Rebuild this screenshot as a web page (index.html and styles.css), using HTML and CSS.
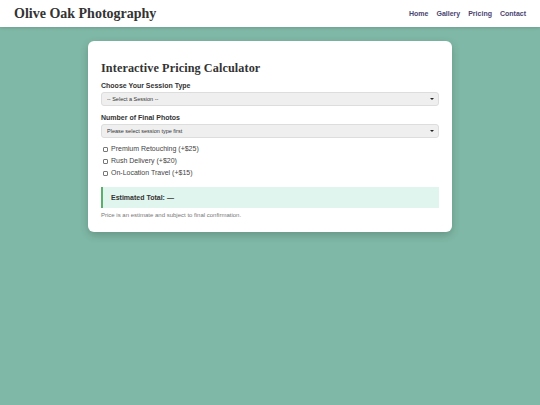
FILE: index.html
```html
<!DOCTYPE html>
<html lang="en">
<head>
<meta charset="utf-8">
<title>Olive Oak Photography - Pricing</title>
<link rel="stylesheet" href="styles.css">
</head>
<body>
<header class="site-header">
  <div class="brand">Olive Oak Photography</div>
  <nav class="nav">
    <a href="#">Home</a>
    <a href="#">Gallery</a>
    <a href="#">Pricing</a>
    <a href="#">Contact</a>
  </nav>
</header>
<main class="main">
  <section class="card">
    <h1 class="card-title">Interactive Pricing Calculator</h1>
    <label class="field-label" for="session">Choose Your Session Type</label>
    <div class="select-wrap">
      <select id="session" class="select">
        <option>-- Select a Session --</option>
      </select>
    </div>
    <label class="field-label" for="photos">Number of Final Photos</label>
    <div class="select-wrap">
      <select id="photos" class="select">
        <option>Please select session type first</option>
      </select>
    </div>
    <div class="options">
      <label class="option"><input type="checkbox" class="check"> Premium Retouching (+$25)</label>
      <label class="option"><input type="checkbox" class="check"> Rush Delivery (+$20)</label>
      <label class="option"><input type="checkbox" class="check"> On-Location Travel (+$15)</label>
    </div>
    <div class="total">Estimated Total: —</div>
    <p class="note">Price is an estimate and subject to final confirmation.</p>
  </section>
</main>
</body>
</html>
```
FILE: styles.css
```css
html, body {
  margin: 0;
  padding: 0;
}
body {
  background: #7fb8a6;
  font-family: "Liberation Sans", Arial, sans-serif;
  color: #333;
  min-height: 405px;
}
.site-header {
  background: #fff;
  height: 27px;
  display: flex;
  align-items: center;
  justify-content: space-between;
  padding: 0 14px;
  box-shadow: 0 1px 3px rgba(0,0,0,0.15);
}
.brand {
  font-family: "Liberation Serif", Georgia, serif;
  font-weight: bold;
  font-size: 14px;
  color: #333;
}
.nav {
  display: flex;
  gap: 8px;
}
.nav a {
  font-size: 7px;
  font-weight: bold;
  color: #4a4470;
  text-decoration: none;
}
.main {
  padding-top: 14px;
  display: flex;
  justify-content: center;
}
.card {
  background: #fff;
  width: 338px;
  padding: 20px 13px 13px;
  border-radius: 6px;
  box-shadow: 0 3px 8px rgba(0,0,0,0.2);
}
.card-title {
  font-family: "Liberation Serif", Georgia, serif;
  font-size: 12.2px;
  line-height: 15px;
  font-weight: bold;
  margin: 0 0 5px;
  color: #333;
  letter-spacing: 0.1px;
}
.field-label {
  display: block;
  font-size: 7px;
  line-height: 9px;
  font-weight: bold;
  margin-bottom: 2px;
}
.select-wrap {
  position: relative;
  margin-bottom: 7px;
}
.select-wrap::after {
  content: "";
  position: absolute;
  right: 5px;
  top: 6px;
  border-left: 2px solid transparent;
  border-right: 2px solid transparent;
  border-top: 2px solid #222;
}
.select {
  display: block;
  width: 100%;
  height: 14px;
  -webkit-appearance: none;
  appearance: none;
  font-family: "Liberation Sans", Arial, sans-serif;
  font-size: 5.5px;
  line-height: 12px;
  padding: 0 5px;
  background: #efefef;
  border: 1px solid #ddd;
  border-radius: 3px;
  color: #333;
  margin: 0;
}
.options {
  display: flex;
  flex-direction: column;
  margin-top: -2px;
}
.option {
  font-size: 7px;
  line-height: 12px;
  color: #444;
  display: flex;
  align-items: center;
  gap: 3px;
}
.check {
  -webkit-appearance: none;
  appearance: none;
  width: 5px;
  height: 5px;
  border: 0.8px solid #777;
  border-radius: 1px;
  margin: 0 0 0 2px;
  background: #fff;
}
.total {
  margin-top: 8px;
  background: #e0f5ee;
  border-left: 2px solid #5cae6e;
  padding: 0 8px;
  height: 21px;
  display: flex;
  align-items: center;
  font-size: 7px;
  font-weight: bold;
  color: #333;
}
.note {
  font-size: 6px;
  line-height: 8px;
  color: #777;
  margin: 3px 0 0;
}
```
